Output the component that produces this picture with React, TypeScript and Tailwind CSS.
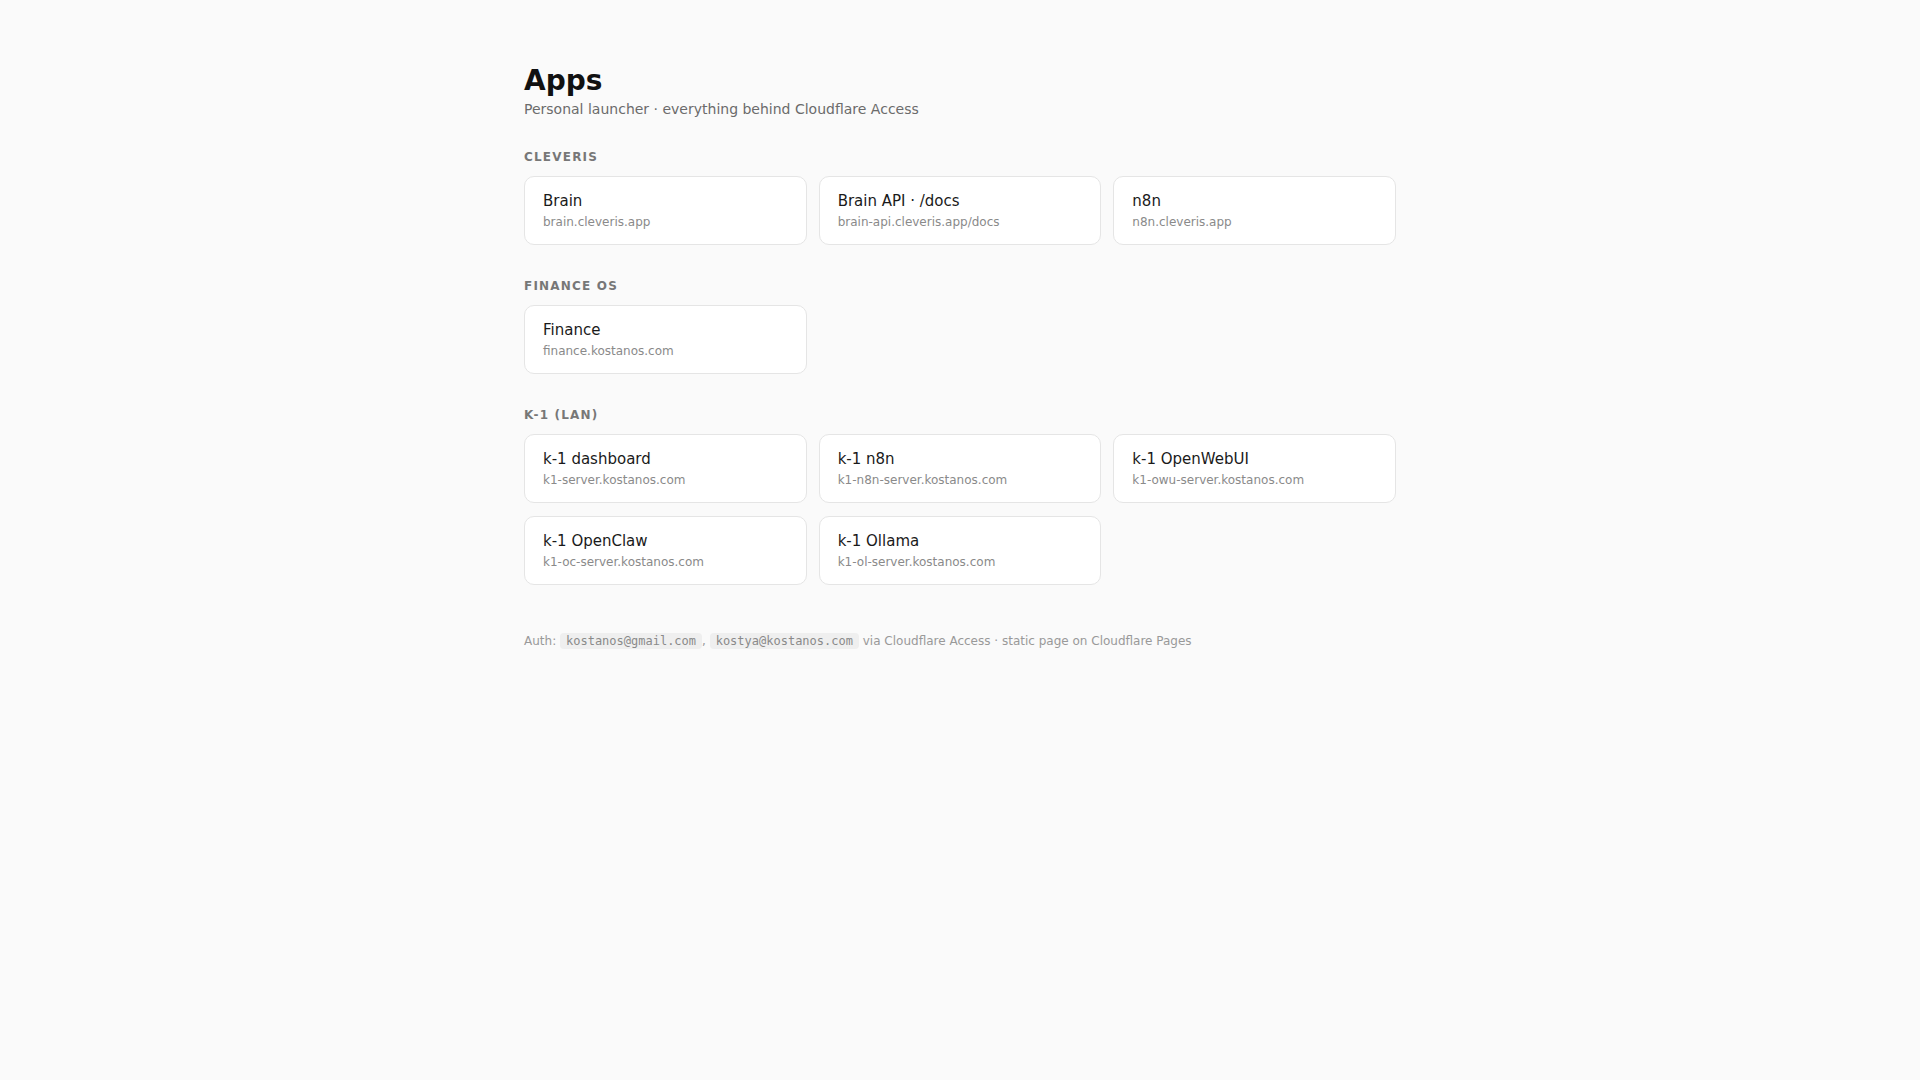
type AppLink = { name: string; host: string };
type Section = { title: string; apps: AppLink[] };

const SECTIONS: Section[] = [
  {
    title: 'Cleveris',
    apps: [
      { name: 'Brain', host: 'brain.cleveris.app' },
      { name: 'Brain API · /docs', host: 'brain-api.cleveris.app/docs' },
      { name: 'n8n', host: 'n8n.cleveris.app' },
    ],
  },
  {
    title: 'Finance OS',
    apps: [{ name: 'Finance', host: 'finance.kostanos.com' }],
  },
  {
    title: 'k-1 (LAN)',
    apps: [
      { name: 'k-1 dashboard', host: 'k1-server.kostanos.com' },
      { name: 'k-1 n8n', host: 'k1-n8n-server.kostanos.com' },
      { name: 'k-1 OpenWebUI', host: 'k1-owu-server.kostanos.com' },
      { name: 'k-1 OpenClaw', host: 'k1-oc-server.kostanos.com' },
      { name: 'k-1 Ollama', host: 'k1-ol-server.kostanos.com' },
    ],
  },
];

function AppCard({ app }: { app: AppLink }) {
  return (
    <a
      href={`https://${app.host}`}
      className="block rounded-[10px] border border-[#e5e5e5] bg-white px-[18px] py-[14px] hover:border-[#cfcfcf]"
    >
      <div className="text-[15px] leading-[20px] text-[#1a1a1a]">{app.name}</div>
      <div className="mt-[3px] text-[12px] leading-[16px] text-[#8a8a8a]">{app.host}</div>
    </a>
  );
}

function Code({ children }: { children: string }) {
  return (
    <code className="rounded-[4px] bg-[#efefef] px-[6px] py-px font-['DejaVu_Sans_Mono',monospace] text-[12px] text-[#8a8a8a]">
      {children}
    </code>
  );
}

export default function App() {
  return (
    <div className="min-h-screen bg-[#fafafa] font-['DejaVu_Sans',sans-serif]">
      <div className="mx-auto max-w-[920px] px-6 pt-[64px] pb-16">
        <h1 className="text-[28px] font-bold leading-[34px] text-[#111]">Apps</h1>
        <p className="mt-[1px] text-[14px] leading-[20px] text-[#6b6b6b]">
          Personal launcher · everything behind Cloudflare Access
        </p>

        {SECTIONS.map((s, i) => (
          <section key={s.title} className={i === 0 ? 'mt-[30px]' : 'mt-[33px]'}>
            <h2 className="mb-[11px] text-[12px] font-bold uppercase leading-[16px] tracking-[0.1em] text-[#777]">
              {s.title}
            </h2>
            <div className="grid grid-cols-3 gap-x-3 gap-y-[13px]">
              {s.apps.map((a) => (
                <AppCard key={a.host} app={a} />
              ))}
            </div>
          </section>
        ))}

        <p className="mt-[48px] text-[12px] leading-[16px] text-[#999]">
          Auth: <Code>kostanos@gmail.com</Code>, <Code>kostya@kostanos.com</Code> via Cloudflare Access · static page on
          Cloudflare Pages
        </p>
      </div>
    </div>
  );
}
